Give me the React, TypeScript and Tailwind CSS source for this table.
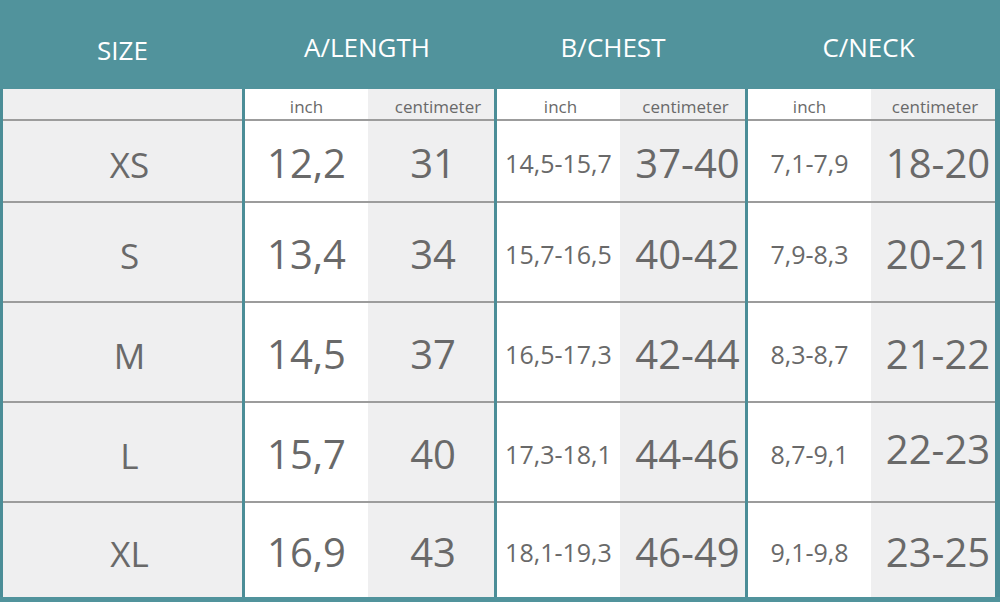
import React from 'react';

const rows = [
	{ size: 'XS', h: 'h-[82px]', a: ['12,2', '31'], b: ['14,5-15,7', '37-40'], c: ['7,1-7,9', '18-20'] },
	{ size: 'S', h: 'h-[100px]', a: ['13,4', '34'], b: ['15,7-16,5', '40-42'], c: ['7,9-8,3', '20-21'] },
	{ size: 'M', h: 'h-[100px]', a: ['14,5', '37'], b: ['16,5-17,3', '42-44'], c: ['8,3-8,7', '21-22'] },
	{ size: 'L', h: 'h-[100px]', a: ['15,7', '40'], b: ['17,3-18,1', '44-46'], c: ['8,7-9,1', '22-23'] },
	{ size: 'XL', h: 'h-[94px]', a: ['16,9', '43'], b: ['18,1-19,3', '46-49'], c: ['9,1-9,8', '23-25'] },
];

const line = 'border-b-2 border-[#9c9c9c]';

export default function App() {
	return (
		<div className="w-[1000px] h-[602px] bg-[#51939c] font-['Open_Sans',sans-serif] text-[#696969] overflow-hidden">
			{/* header band */}
			<div className="flex h-[89px] pl-[3px] text-white text-[26px]">
				<div className="w-[239px] flex items-center justify-center pt-[12px]">SIZE</div>
				<div className="w-[252px] ml-[3px] flex items-center justify-center pt-[6px] pr-[8px]">A/LENGTH</div>
				<div className="w-[248px] ml-[3px] flex items-center justify-center pt-[6px] pr-[22px]">B/CHEST</div>
				<div className="w-[247px] ml-[3px] flex items-center justify-center pt-[6px] pr-[12px]">C/NECK</div>
			</div>

			<div className="pl-[3px] pr-[5px] bg-[#4b8d97]">
				{/* units row */}
				<div className="flex gap-[3px] h-[32px] text-[17px]">
					<div className={`w-[239px] bg-[#efeff0] ${line}`} />
					<div className="flex">
						<div className={`w-[123px] bg-white flex items-center justify-center pt-[6px] ${line}`}>inch</div>
						<div className={`w-[126px] bg-[#efeff0] flex items-center justify-center pl-[14px] pt-[6px] ${line}`}>centimeter</div>
					</div>
					<div className="flex">
						<div className={`w-[123px] bg-white flex items-center justify-center pl-[4px] pt-[6px] ${line}`}>inch</div>
						<div className={`w-[125px] bg-[#efeff0] flex items-center justify-center pl-[6px] pt-[6px] ${line}`}>centimeter</div>
					</div>
					<div className="flex">
						<div className={`w-[123px] bg-white flex items-center justify-center pt-[6px] ${line}`}>inch</div>
						<div className={`w-[124px] bg-[#efeff0] flex items-center justify-center pl-[4px] pt-[6px] ${line}`}>centimeter</div>
					</div>
				</div>

				{rows.map((r, i) => {
					const b = i < rows.length - 1 ? line : '';
					// the L row's neck value sits a little higher in the source
					const cTop = r.size === 'L' ? 'pb-[6px]' : 'pt-[4px]';
					return (
						<div key={r.size} className={`flex gap-[3px] ${r.h}`}>
							<div className={`w-[239px] bg-[#efeff0] flex items-center justify-center pl-[14px] pt-[8px] text-[35px] ${b}`}>
								{r.size}
							</div>
							<div className="flex">
								<div className={`w-[123px] bg-white flex items-center justify-center pt-[4px] text-[40px] ${b}`}>{r.a[0]}</div>
								<div className={`w-[126px] bg-[#efeff0] flex items-center justify-center pl-[4px] pt-[4px] text-[40px] ${b}`}>{r.a[1]}</div>
							</div>
							<div className="flex">
								<div className={`w-[123px] bg-white flex items-center justify-center pt-[6px] text-[25px] ${b}`}>{r.b[0]}</div>
								<div className={`w-[125px] bg-[#efeff0] flex items-center justify-center pl-[10px] pt-[4px] text-[40px] ${b}`}>{r.b[1]}</div>
							</div>
							<div className="flex">
								<div className={`w-[123px] bg-white flex items-center justify-center pt-[6px] text-[25px] ${b}`}>{r.c[0]}</div>
								<div className={`w-[124px] bg-[#efeff0] flex items-center justify-center pl-[10px] text-[40px] ${cTop} ${b}`}>{r.c[1]}</div>
							</div>
						</div>
					);
				})}
			</div>
		</div>
	);
}
